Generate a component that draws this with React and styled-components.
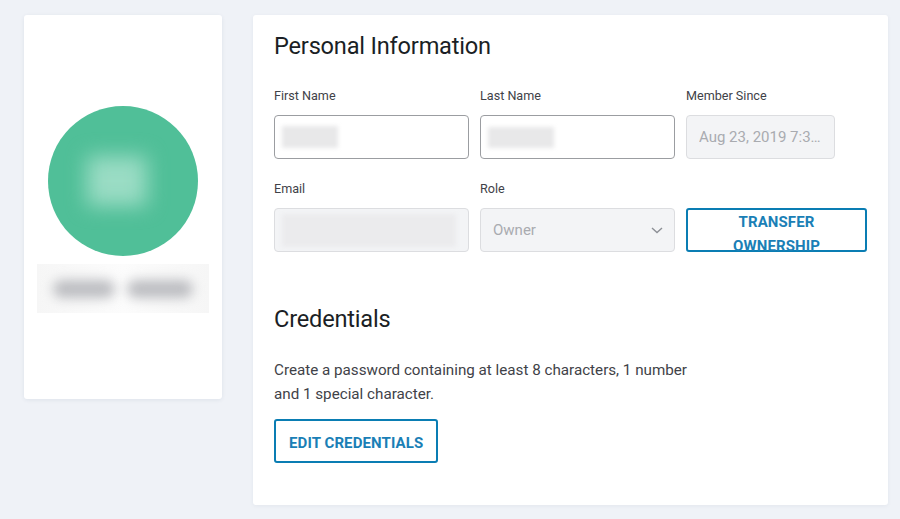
import React from 'react';
import styled, { createGlobalStyle } from 'styled-components';

const GlobalStyle = createGlobalStyle`
  html, body {
    margin: 0;
    padding: 0;
    background: #eff2f7;
    font-family: Roboto, "Liberation Sans", sans-serif;
  }
`;

const Page = styled.div`
  display: flex;
  align-items: flex-start;
  gap: 31px;
  padding: 15px 15px 0 24px;
  height: 519px;
  box-sizing: border-box;
  overflow: hidden;
`;

const ProfileCard = styled.div`
  flex-shrink: 0;
  width: 198px;
  height: 384px;
  background: #fff;
  border-radius: 3px;
  box-shadow: 0 1px 4px rgba(30, 50, 90, 0.08);
  display: flex;
  flex-direction: column;
  align-items: center;
  padding-top: 91px;
  box-sizing: border-box;
`;

const Avatar = styled.div`
  width: 150px;
  height: 150px;
  border-radius: 50%;
  background: #50bf98;
  display: flex;
  align-items: center;
  justify-content: center;
  overflow: hidden;
`;

const Initials = styled.div`
  width: 60px;
  height: 50px;
  margin-right: 12px;
  background: #9adcc4;
  filter: blur(10px);
`;

const NameBox = styled.div`
  margin-top: 8px;
  width: 172px;
  height: 49px;
  background: linear-gradient(90deg, #f6f6f6, #fcfcfc 50%, #f6f6f6);
  display: flex;
  align-items: center;
  justify-content: center;
  gap: 12px;
`;

const NameBlob = styled.div`
  width: ${p => p.w}px;
  height: 18px;
  background: #bcbdc1;
  border-radius: 9px;
  filter: blur(6px);
`;

const MainCard = styled.div`
  flex: 1;
  height: 490px;
  background: #fff;
  border-radius: 3px;
  box-shadow: 0 1px 4px rgba(30, 50, 90, 0.06);
  padding: 17px 21px 0 21px;
  box-sizing: border-box;
  color: #1d2026;
`;

const Heading = styled.h2`
  margin: 0;
  font-size: 23.6px;
  font-weight: 400;
  line-height: 28px;
  color: #1b1f25;
  letter-spacing: -0.2px;
`;

const FieldGrid = styled.div`
  display: grid;
  grid-template-columns: 195px 195px 181px;
  column-gap: 11px;
  row-gap: 22px;
  margin-top: 28px;
`;

const Field = styled.div`
  display: flex;
  flex-direction: column;
`;

const Label = styled.label`
  font-size: 12.6px;
  color: #3f4248;
  line-height: 16px;
  margin-bottom: 11px;
`;

const Input = styled.div`
  height: 44px;
  box-sizing: border-box;
  width: ${p => (p.narrow ? '149px' : '100%')};
  border: 1px solid ${p => (p.disabled ? '#dcdde0' : '#9b9da1')};
  background: ${p => (p.disabled ? '#f3f4f6' : '#fff')};
  border-radius: 4px;
  display: flex;
  align-items: center;
  padding: 0 12px;
  font-size: 15px;
  color: #a9abb0;
  white-space: nowrap;
  overflow: hidden;
`;

const InputText = styled.span`
  overflow: hidden;
  text-overflow: ellipsis;
`;

const Blur = styled.div`
  width: ${p => p.w}px;
  height: ${p => p.h}px;
  margin-left: -5px;
  background: ${p => p.c || '#e8e8e9'};
  filter: blur(2px);
`;

const Chevron = styled.svg`
  margin-left: auto;
  margin-right: -2px;
`;

const OutlineButton = styled.button`
  height: 44px;
  box-sizing: border-box;
  border: 2px solid #0a7db3;
  border-radius: 3px;
  background: #fff;
  color: #1a7fb6;
  font-family: Roboto, "Liberation Sans", sans-serif;
  font-weight: 700;
  font-size: 15px;
  line-height: 24px;
  letter-spacing: 0.1px;
  padding: ${p => (p.full ? '0 13px 11px' : '3px 13px 0')};
  cursor: pointer;
  width: ${p => (p.full ? '100%' : 'auto')};
  overflow: visible;
`;

const Section = styled.div`
  margin-top: 53px;
`;

const Paragraph = styled.p`
  margin: 25px 0 13px;
  font-size: 15.2px;
  line-height: 24px;
  color: #3f4248;
  max-width: 430px;
`;

export default function App() {
  return (
    <>
      <GlobalStyle />
      <Page>
        <ProfileCard>
          <Avatar>
            <Initials />
          </Avatar>
          <NameBox>
            <NameBlob w={62} />
            <NameBlob w={66} />
          </NameBox>
        </ProfileCard>
        <MainCard>
          <Heading>Personal Information</Heading>
          <FieldGrid>
            <Field>
              <Label>First Name</Label>
              <Input>
                <Blur w={56} h={22} />
              </Input>
            </Field>
            <Field>
              <Label>Last Name</Label>
              <Input>
                <Blur w={66} h={21} />
              </Input>
            </Field>
            <Field>
              <Label>Member Since</Label>
              <Input narrow disabled>
                <InputText>Aug 23, 2019 7:30 AM</InputText>
              </Input>
            </Field>
            <Field>
              <Label>Email</Label>
              <Input disabled>
                <Blur w={179} h={33} c="#ebebed" />
              </Input>
            </Field>
            <Field>
              <Label>Role</Label>
              <Input disabled>
                Owner
                <Chevron width="14" height="14" viewBox="0 0 14 14" fill="none">
                  <path d="M2 5l5 4.5L12 5" stroke="#8d9096" strokeWidth="1.4" />
                </Chevron>
              </Input>
            </Field>
            <Field>
              <Label>&nbsp;</Label>
              <OutlineButton full>TRANSFER<br />OWNERSHIP</OutlineButton>
            </Field>
          </FieldGrid>
          <Section>
            <Heading>Credentials</Heading>
            <Paragraph>
              Create a password containing at least 8 characters, 1 number and 1 special character.
            </Paragraph>
            <OutlineButton>EDIT CREDENTIALS</OutlineButton>
          </Section>
        </MainCard>
      </Page>
    </>
  );
}
